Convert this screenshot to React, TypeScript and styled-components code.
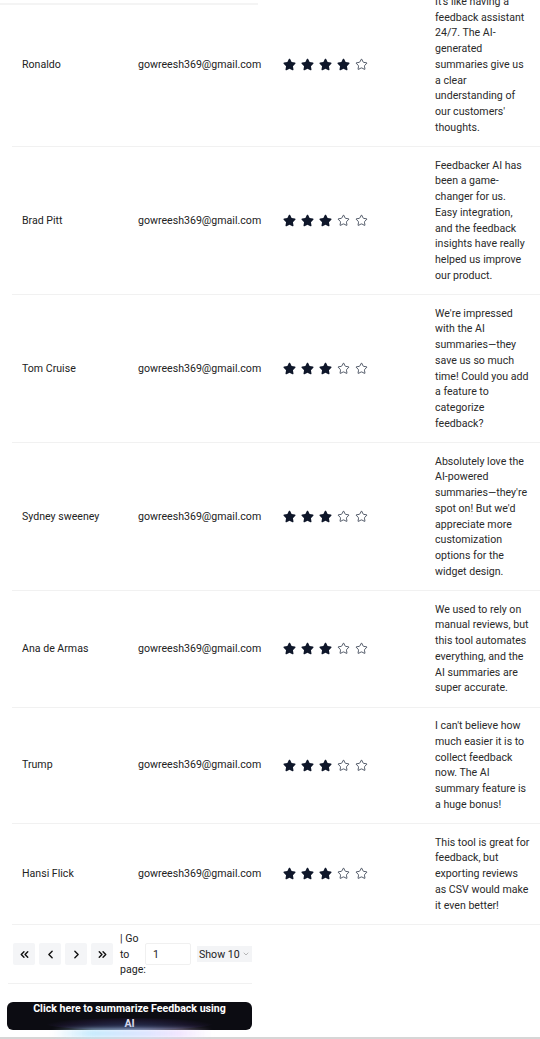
import React from 'react'
import styled, { createGlobalStyle } from 'styled-components'
import { FaStar } from 'react-icons/fa'
import { Star, ChevronLeft, ChevronRight, ChevronsLeft, ChevronsRight, ChevronDown } from 'lucide-react'

interface Review {
  name: string
  email: string
  rating: number
  feedback: string
}

const reviews: Review[] = [
  {
    name: 'Ronaldo',
    email: 'gowreesh369@gmail.com',
    rating: 4,
    feedback:
      "It's like having a feedback assistant 24/7. The AI-generated summaries give us a clear understanding of our customers' thoughts."
  },
  {
    name: 'Brad Pitt',
    email: 'gowreesh369@gmail.com',
    rating: 3,
    feedback:
      'Feedbacker AI has been a game-changer for us. Easy integration, and the feedback insights have really helped us improve our product.'
  },
  {
    name: 'Tom Cruise',
    email: 'gowreesh369@gmail.com',
    rating: 3,
    feedback:
      "We're impressed with the AI summaries—they save us so much time! Could you add a feature to categorize feedback?"
  },
  {
    name: 'Sydney sweeney',
    email: 'gowreesh369@gmail.com',
    rating: 3,
    feedback:
      "Absolutely love the AI-powered summaries—they're spot on! But we'd appreciate more customization options for the widget design."
  },
  {
    name: 'Ana de Armas',
    email: 'gowreesh369@gmail.com',
    rating: 3,
    feedback:
      'We used to rely on manual reviews, but this tool automates everything, and the AI summaries are super accurate.'
  },
  {
    name: 'Trump',
    email: 'gowreesh369@gmail.com',
    rating: 3,
    feedback:
      "I can't believe how much easier it is to collect feedback now. The AI summary feature is a huge bonus!"
  },
  {
    name: 'Hansi Flick',
    email: 'gowreesh369@gmail.com',
    rating: 3,
    feedback:
      'This tool is great for feedback, but exporting reviews as CSV would make it even better!'
  }
]

const Stars = ({ rating }: { rating: number }) => (
  <StarRow>
    {[1, 2, 3, 4, 5].map(i =>
      i <= rating ? (
        <FaStar key={i} size={13} color="#0f172a" />
      ) : (
        <Star key={i} size={13} strokeWidth={1.4} color="#1e293b" />
      )
    )}
  </StarRow>
)

const App = () => {
  return (
    <Page>
      <GlobalStyle />
      <TopShade />
      <Scroller>
        <Table>
          <colgroup>
            <col style={{ width: 116 }} />
            <col style={{ width: 145 }} />
            <col style={{ width: 152 }} />
            <col style={{ width: 115 }} />
          </colgroup>
          <tbody>
            {reviews.map(r => (
              <Row key={r.name}>
                <Cell>{r.name}</Cell>
                <Cell>{r.email}</Cell>
                <Cell>
                  <Stars rating={r.rating} />
                </Cell>
                <FeedbackCell>{r.feedback}</FeedbackCell>
              </Row>
            ))}
          </tbody>
        </Table>

        <Pager>
          <NavButton>
            <ChevronsLeft size={13} strokeWidth={2.6} />
          </NavButton>
          <NavButton>
            <ChevronLeft size={13} strokeWidth={2.6} />
          </NavButton>
          <NavButton>
            <ChevronRight size={13} strokeWidth={2.6} />
          </NavButton>
          <NavButton>
            <ChevronsRight size={13} strokeWidth={2.6} />
          </NavButton>
          <GoLabel>| Go to page:</GoLabel>
          <PageInput defaultValue="1" />
          <ShowSelect>
            Show 10
            <ChevronDown size={8} strokeWidth={1.5} color="#777" />
          </ShowSelect>
        </Pager>

        <SummarizeButton>Click here to summarize Feedback using AI</SummarizeButton>
        <BottomEdge />
      </Scroller>
    </Page>
  )
}

const GlobalStyle = createGlobalStyle`
  html, body {
    margin: 0;
    padding: 0;
    background: #ffffff;
  }
  body {
    font-family: Roboto, "Liberation Sans", Arial, sans-serif;
    color: #222222;
    overflow: hidden;
  }
`

const Page = styled.div`
  position: relative;
  width: 540px;
  height: 1039px;
  overflow: hidden;
`

const TopShade = styled.div`
  position: absolute;
  top: 3px;
  left: 0;
  width: 258px;
  height: 2px;
  background: #f4f4f4;
  z-index: 2;
`

const Scroller = styled.div`
  margin-top: -16.75px;
`

const Table = styled.table`
  margin-left: 12px;
  width: 528px;
  table-layout: fixed;
  border-collapse: collapse;
  font-size: 10.6px;
  line-height: 15.75px;
`

const Row = styled.tr`
  border-bottom: 1px solid #f1f1f1;
`

const Cell = styled.td`
  padding: 10.5px 10px;
  vertical-align: middle;
  color: #222222;
  white-space: nowrap;
`

const FeedbackCell = styled(Cell)`
  padding-right: 10.5px;
  white-space: normal;
  color: #2a2a2a;
`

const StarRow = styled.div`
  display: flex;
  align-items: center;
  gap: 5px;
`

const Pager = styled.div`
  display: flex;
  align-items: center;
  width: 239px;
  margin-left: 8px;
  padding: 6px 0 5px 5px;
  border-bottom: 1px solid #f1f1f1;
  font-size: 10.6px;
  line-height: 15.75px;
`

const NavButton = styled.button`
  display: flex;
  align-items: center;
  justify-content: center;
  flex: none;
  width: 22px;
  height: 22px;
  margin-right: 4px;
  padding: 0;
  border: none;
  border-radius: 2px;
  background: #f4f5f7;
  color: #111111;
`

const GoLabel = styled.span`
  flex: none;
  width: 25px;
  margin-left: 3px;
  color: #222222;
`

const PageInput = styled.input`
  flex: none;
  box-sizing: border-box;
  width: 46px;
  height: 22px;
  margin-left: 0;
  padding: 0 0 0 7px;
  border: 1px solid #f0f0f0;
  border-radius: 2px;
  font-family: inherit;
  font-size: 10.6px;
  color: #222222;
  outline: none;
`

const ShowSelect = styled.div`
  display: flex;
  flex: none;
  align-items: center;
  gap: 2px;
  height: 16px;
  margin-left: 6px;
  padding: 0 2px;
  background: #f3f4f6;
  color: #222222;
  white-space: nowrap;
`

const SummarizeButton = styled.button`
  position: relative;
  display: block;
  box-sizing: border-box;
  width: 245px;
  height: 28px;
  margin: 18px 0 0 7px;
  padding: 0 22px;
  border: none;
  border-radius: 6px;
  background: #0c0c12;
  color: #ffffff;
  font-family: inherit;
  font-size: 10.6px;
  font-weight: 700;
  line-height: 14.5px;
  text-align: center;
  overflow: visible;

  &::before {
    content: '';
    position: absolute;
    left: 40px;
    right: 40px;
    bottom: 0;
    height: 12px;
    border-radius: 50%;
    background: radial-gradient(ellipse at center bottom, rgba(90, 120, 200, 0.45), rgba(90, 60, 160, 0.15) 60%, transparent 80%);
    pointer-events: none;
  }

  &::after {
    content: '';
    position: absolute;
    left: 45px;
    right: 40px;
    bottom: -8px;
    height: 9px;
    background: linear-gradient(90deg, rgba(186, 230, 253, 0) 0%, rgba(186, 230, 253, 0.8) 25%, rgba(214, 222, 255, 0.8) 60%, rgba(233, 213, 255, 0.6) 80%, rgba(233, 213, 255, 0) 100%);
    filter: blur(2px);
    pointer-events: none;
  }
`

const BottomEdge = styled.div`
  height: 2px;
  margin-top: 7px;
  background: #d6d6d6;
`

export default App
